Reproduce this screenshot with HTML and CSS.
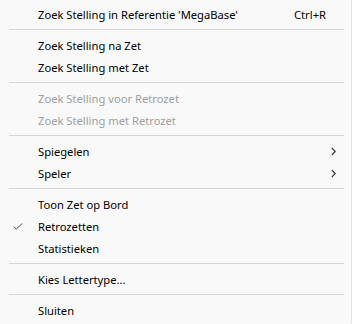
FILE: index.html
```html
<!DOCTYPE html>
<html>
<head>
<meta charset="utf-8">
<link rel="stylesheet" href="styles.css">
</head>
<body>
<div class="menu">
  <div class="item"><span class="label">Zoek Stelling in Referentie 'MegaBase'</span><span class="shortcut">Ctrl+R</span></div>
  <div class="sep"></div>
  <div class="item"><span class="label">Zoek Stelling na Zet</span></div>
  <div class="item"><span class="label">Zoek Stelling met Zet</span></div>
  <div class="sep"></div>
  <div class="item disabled"><span class="label">Zoek Stelling voor Retrozet</span></div>
  <div class="item disabled"><span class="label">Zoek Stelling met Retrozet</span></div>
  <div class="sep"></div>
  <div class="item"><span class="label">Spiegelen</span><svg class="arrow" width="5" height="9" viewBox="0 0 5 9"><path d="M0.8 0.8 L4.2 4.5 L0.8 8.2" fill="none" stroke="#333" stroke-width="1.2"/></svg></div>
  <div class="item"><span class="label">Speler</span><svg class="arrow" width="5" height="9" viewBox="0 0 5 9"><path d="M0.8 0.8 L4.2 4.5 L0.8 8.2" fill="none" stroke="#333" stroke-width="1.2"/></svg></div>
  <div class="sep"></div>
  <div class="item"><span class="label">Toon Zet op Bord</span></div>
  <div class="item checked"><svg class="check" width="10" height="7" viewBox="0 0 10 7"><path d="M0.7 3.6 L3.2 6 L9.3 0.6" fill="none" stroke="#555" stroke-width="1"/></svg><span class="label">Retrozetten</span></div>
  <div class="item"><span class="label">Statistieken</span></div>
  <div class="sep"></div>
  <div class="item"><span class="label">Kies Lettertype...</span></div>
  <div class="sep"></div>
  <div class="item"><span class="label">Sluiten</span></div>
</div>
</body>
</html>
```
FILE: styles.css
```css
html, body {
  margin: 0;
  padding: 0;
  background: #f9f9f9;
}
.menu {
  width: 351px;
  height: 323px;
  background: #f9f9f9;
  border-right: 1px solid #e3e3e3;
  border-bottom: 1px solid #e3e3e3;
  border-bottom-right-radius: 6px;
  padding-top: 3px;
  box-sizing: content-box;
  font-family: "Noto Sans", sans-serif;
  font-size: 11.2px;
  color: #000;
}
.item {
  position: relative;
  display: flex;
  align-items: center;
  height: 22px;
  padding-left: 38px;
  padding-right: 25px;
}
.label {
  white-space: nowrap;
}
.shortcut {
  margin-left: auto;
  white-space: nowrap;
}
.disabled {
  color: #a0a0a0;
}
.sep {
  height: 1px;
  margin: 4px 7px 4px 9px;
  background: #d7d7d7;
}
.arrow {
  margin-left: auto;
  margin-right: -10px;
}
.check {
  position: absolute;
  left: 13px;
  top: 8px;
}
```
